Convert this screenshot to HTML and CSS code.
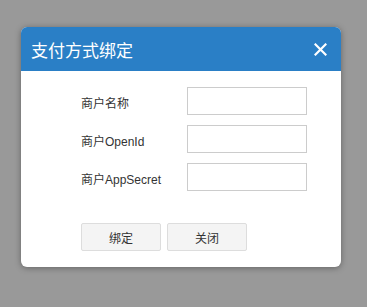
FILE: index.html
```html
<!DOCTYPE html>
<html lang="zh-CN">
<head>
  <meta charset="UTF-8">
  <title>支付方式绑定</title>
  <link rel="stylesheet" href="styles.css">
</head>
<body>
  <div class="dialog">
    <div class="dialog-header">
      <span class="dialog-title">支付方式绑定</span>
      <button class="dialog-close" type="button">
        <svg width="13" height="13" viewBox="0 0 13 13">
          <path d="M1.5 1.5 L11.5 11.5 M11.5 1.5 L1.5 11.5" stroke="#fff" stroke-width="2.2" stroke-linecap="square"/>
        </svg>
      </button>
    </div>

    <div class="dialog-body">
      <div class="form-grid">
        <label for="merchant-name">商户名称</label>
        <input type="text" id="merchant-name">

        <label for="merchant-openid">商户OpenId</label>
        <input type="text" id="merchant-openid">

        <label for="merchant-secret">商户AppSecret</label>
        <input type="text" id="merchant-secret">
      </div>

      <div class="actions">
        <button class="btn" type="button">绑定</button>
        <button class="btn" type="button">关闭</button>
      </div>
    </div>
  </div>
</body>
</html>
```

FILE: styles.css
```css
body {
  margin: 0;
  padding: 27px 0 0 21px;
  background-color: #999999;
  font-family: "Liberation Sans", Arial, "Noto Sans CJK SC", sans-serif;
  height: 307px;
  box-sizing: border-box;
}

.dialog {
  width: 320px;
  height: 240px;
  background-color: #fff;
  border-radius: 6px;
  box-shadow: 0 1px 6px rgba(0, 0, 0, 0.35);
  overflow: hidden;
}

.dialog-header {
  height: 44px;
  background-color: #2a7fc6;
  display: flex;
  align-items: center;
  justify-content: space-between;
  padding: 0 14px 0 10px;
}

.dialog-title {
  color: #fff;
  font-size: 17px;
  font-family: "Noto Sans CJK SC", sans-serif;
}

.dialog-close {
  background: none;
  border: none;
  padding: 0;
  display: flex;
  cursor: pointer;
}

.dialog-body {
  padding: 16px 0 0 60px;
}

.form-grid {
  display: grid;
  grid-template-columns: 106px 120px;
  row-gap: 10px;
  align-items: center;
}

.form-grid label {
  font-size: 12px;
  color: #333;
  padding-top: 2px;
}

.form-grid input {
  height: 28px;
  box-sizing: border-box;
  border: 1px solid #cccccc;
  margin: 0;
  padding: 0 6px;
  outline: none;
}

.actions {
  display: flex;
  gap: 6px;
  margin-top: 32px;
}

.btn {
  width: 80px;
  height: 28px;
  background-color: #f4f4f4;
  border: 1px solid #dddddd;
  border-radius: 2px;
  font-size: 12px;
  color: #333;
  font-family: "Noto Sans CJK SC", sans-serif;
  cursor: pointer;
}
```
